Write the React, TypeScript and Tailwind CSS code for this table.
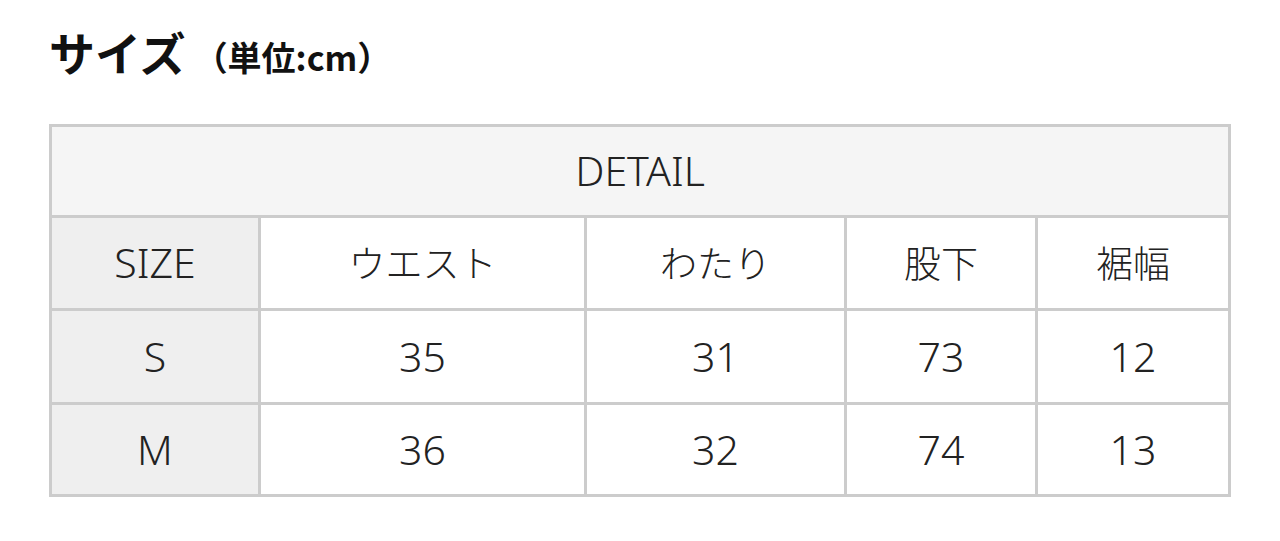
import React from 'react';

const columns = ['ウエスト', 'わたり', '股下', '裾幅'];

const rows = [
  { size: 'S', values: ['35', '31', '73', '12'] },
  { size: 'M', values: ['36', '32', '74', '13'] },
];

const latin = { fontFamily: '"Noto Sans", "Noto Sans CJK JP", sans-serif' };

export default function App() {
  return (
    <div
      className="bg-white w-[1280px] h-[541px] pt-[28px] pl-[49px] text-[#222]"
      style={{ fontFamily: '"Noto Sans CJK JP", "Noto Sans", sans-serif' }}
    >
      {/* Title */}
      <h2 className="flex items-baseline h-[64px] text-[#111] font-bold">
        <span className="text-[46px] leading-none">サイズ</span>
        <span className="text-[34px] leading-none ml-[8px]">（単位:cm）</span>
      </h2>

      {/* Size table */}
      <div className="mt-[32px] inline-grid grid-cols-[206px_323px_257px_188px_190px] grid-rows-[88px_90px_91px_89px] gap-[3px] p-[3px] bg-[#cccccc] text-[37px] font-light">
        <div className="col-span-5 bg-[#f5f5f5] flex items-center justify-center text-[41px]" style={latin}>
          DETAIL
        </div>

        <div className="bg-[#efefef] flex items-center justify-center text-[41px]" style={latin}>
          SIZE
        </div>
        {columns.map((c) => (
          <div key={c} className="bg-white flex items-center justify-center">
            {c}
          </div>
        ))}

        {rows.map((r) => (
          <React.Fragment key={r.size}>
            <div className="bg-[#efefef] flex items-center justify-center text-[41px]" style={latin}>
              {r.size}
            </div>
            {r.values.map((v, i) => (
              <div key={i} className="bg-white flex items-center justify-center text-[41px]" style={latin}>
                {v}
              </div>
            ))}
          </React.Fragment>
        ))}
      </div>
    </div>
  );
}
